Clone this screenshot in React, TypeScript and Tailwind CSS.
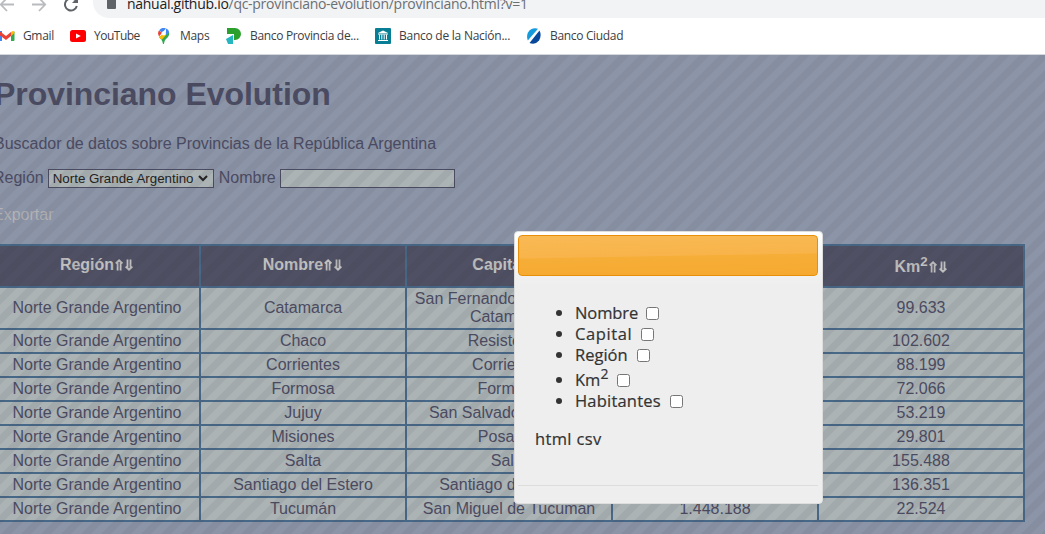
import React from "react";

const rows = [
  ["Norte Grande Argentino", "Catamarca", "San Fernando del Valle de Catamarca", "367.828", "99.633"],
  ["Norte Grande Argentino", "Chaco", "Resistencia", "1.055.259", "102.602"],
  ["Norte Grande Argentino", "Corrientes", "Corrientes", "992.595", "88.199"],
  ["Norte Grande Argentino", "Formosa", "Formosa", "530.162", "72.066"],
  ["Norte Grande Argentino", "Jujuy", "San Salvador de Jujuy", "673.307", "53.219"],
  ["Norte Grande Argentino", "Misiones", "Posadas", "1.101.593", "29.801"],
  ["Norte Grande Argentino", "Salta", "Salta", "1.214.441", "155.488"],
  ["Norte Grande Argentino", "Santiago del Estero", "Santiago del Estero", "874.006", "136.351"],
  ["Norte Grande Argentino", "Tucumán", "San Miguel de Tucumán", "1.448.188", "22.524"],
];

const Arrows = () => (
  <svg className="inline-block align-[-1px]" width="20" height="12" viewBox="0 0 20 12" fill="none" stroke="#c0c0c0" strokeWidth="1.8">
    <path d="M3.600 11.500V3M6.600 11.500V3M1.700 4.300 5.100 1.300 8.500 4.300M13.500 .5V9M16.500 .5V9M11.600 7.700 15 10.700l3.400-3" />
  </svg>
);

function Toolbar() {
  return (
    <div className="flex h-[18px] overflow-hidden">
      <svg className="shrink-0" width="93" height="18" viewBox="0 0 93 18" fill="none" strokeWidth="1.8">
        <path d="M14 4.500H1M7-2 .8 4.500 7 11M32 4.500h13M39-2l6.200 6.500L39 11" stroke="#b9bbbe" />
        <path d="M76.800 6A6 6 0 1 1 75 0" stroke="#5f6368" strokeWidth="2" />
        <path d="M78-3v6h-6z" fill="#5f6368" />
      </svg>
      <div className="flex h-[18px] flex-1 rounded-bl-[16px] bg-[#f1f3f4] pl-[14px]">
        <svg className="shrink-0" width="9" height="10" viewBox="0 0 9 10">
          <path d="M0 0h9v8a1 1 0 0 1-1 1H1a1 1 0 0 1-1-1z" fill="#5f6368" />
        </svg>
        <div className="-mt-[7px] ml-[11px] h-[24px] whitespace-nowrap text-[14px] leading-[22px] tracking-[-0.28px] text-[#6b6f74]">
          <span className="text-[#202124]">nahual.github.io</span>/qc-provinciano-evolution/provinciano.html?v=1
        </div>
      </div>
    </div>
  );
}

const Mark = ({ children, w, label, className }: { children: React.ReactNode; w: string; label: string; className: string }) => (
  <div className={"flex h-full shrink-0 items-center " + w}>
    {children}
    <span className={"whitespace-nowrap " + className}>{label}</span>
  </div>
);

function Bookmarks() {
  return (
    <div className="flex h-[36px] items-center text-[12px] text-[#3c4043]">
      <Mark w="w-[70px]" label="Gmail" className="ml-[8px] tracking-[-0.35px]">
        <svg width="15" height="12" viewBox="0 0 15 12">
          <path d="M0 1h2v10H0z" fill="#4285f4" />
          <path d="M11 4l3.500-2.500V10a1 1 0 0 1-1 1H11z" fill="#34a853" />
          <path d="M-2 0 6 6l5-4v4L6 10-2 4z" fill="#ea4335" />
          <path d="M11 2q3.500-2.500 3.500 1L11 6z" fill="#fbbc04" />
        </svg>
      </Mark>
      <Mark w="w-[87px]" label="YouTube" className="ml-[8px] tracking-[-0.5px]">
        <svg width="16" height="12" viewBox="0 0 16 12">
          <rect width="16" height="12" rx="2.500" fill="#f00" />
          <path d="M6 3.400v5.200L10.800 6z" fill="#fff" />
        </svg>
      </Mark>
      <Mark w="w-[69px]" label="Maps" className="ml-[9px] tracking-[-0.3px]">
        <svg className="ml-[1px] mr-[1px] shrink-0" width="12" height="16" viewBox="0 0 12 16">
          <path d="M1 9c1.500 2 3.500 3 4 7h1c.500-4 2-5 4-7 1.500-2 1.500-4 .8-5.500z" fill="#34a853" />
          <path d="M1.200 2.300 4 5 8 .5Q4-1.300 1.200 2.300" fill="#4285f4" />
          <path d="M1 2.500 4 5 1 8.500Q-.8 5 1 2.500" fill="#ea4335" />
          <path d="m1 9 7-5v3l-4.500 5z" fill="#fbbc04" />
          <path d="M8 .5q3 1 3 4L8 7z" fill="#4285f4" />
          <circle cx="5.700" cy="5.400" r="2.100" fill="#fff" />
        </svg>
      </Mark>
      <Mark w="w-[149px]" label="Banco Provincia de..." className="ml-[8px] tracking-[-0.33px]">
        <svg width="16" height="16" viewBox="0 0 16 16">
          <path d="M1 0h8a6 6 0 0 1 0 12H8V6H1z" fill="#2ca02c" />
          <path d="M0 11l7-4v9H2z" fill="#25b6c0" />
        </svg>
      </Mark>
      <Mark w="w-[152px]" label="Banco de la Nación..." className="ml-[8px] tracking-[-0.25px]">
        <svg width="16" height="16" viewBox="0 0 16 16">
          <rect width="16" height="16" rx="1" fill="#087e94" />
          <path d="M3 6h10M4.500 6.500v5m2.300-5v5m2.400-5v5m2.300-5v5M3 12.500h10" stroke="#fff" />
          <path d="m3 5 5-2.500L13 5z" fill="#fff" />
        </svg>
      </Mark>
      <Mark w="w-[120px]" label="Banco Ciudad" className="ml-[9px] tracking-[-0.33px]">
        <svg width="14" height="16" viewBox="0 0 14 16">
          <path d="M11 .7 .8 12.500Q-.8 8 1 4.500 4.500-1 11 .7" fill="#159bdc" />
          <path d="M12.500 2.500 2.500 15q5.500 2.500 9.500-2.500 3-5 .5-10" fill="#07489a" />
        </svg>
      </Mark>
    </div>
  );
}

function Check({ className = "ml-[9px]" }: { className?: string }) {
  return <input type="checkbox" className={"h-[13px] w-[13px] appearance-none rounded-[2.5px] border border-[#767676] bg-white align-[-1px] " + className} />;
}

function Dialog() {
  const item = "h-[21px] list-item leading-[21px]";
  return (
    <div className="absolute left-[514px] top-[231px] h-[273px] w-[309px] rounded-[4px] border border-[#ddd] bg-[#eee] bg-[linear-gradient(#fff,#eee_54px)] p-[3px] pr-[4px] font-['Open_Sans','Trebuchet_MS',sans-serif] text-[16.5px] text-[#333] [-webkit-text-stroke:0.2px_#333]">
      <div className="h-[41px] rounded-[4px] border border-[#e78f08] bg-[linear-gradient(179deg,#f9b954_0%,#f8b44a_50%,#f6ae38_52%,#f6a930_100%)]" />
      <ul className="mt-[26px] list-disc pl-[57px]">
        <li className={item}><span className="tracking-[-0.1px]">Nombre</span><Check className="ml-[8px]" /></li>
        <li className={item}><span className="tracking-[0.6px]">Capital</span><Check /></li>
        <li className={item}>Región<Check /></li>
        <li className="list-item h-[25px] leading-[29px]">Km<sup className="top-[-7px] text-[14px] leading-[0]">2</sup><Check /></li>
        <li className={item}><span className="tracking-[0.2px]">Habitantes</span><Check /></li>
      </ul>
      <div className="mt-[17px] pl-[17px] leading-[22px] tracking-[0.35px]">html csv</div>
      <div className="mt-[35px] border-t border-[#ddd]" />
    </div>
  );
}

export default function App() {
  return (
    <div className="relative flex h-[534px] w-[1045px] flex-col overflow-hidden bg-white font-['Open_Sans','Noto_Sans',sans-serif]">
      <Toolbar />
      <Bookmarks />
      <div className="relative flex-1 overflow-hidden border-t border-[#d5d7dc] bg-[#8c94a8] font-['Liberation_Sans',Arial,sans-serif] text-[16px] leading-[18px] text-[#4b4b62]">
        <h1 className="-ml-[6px] mt-[21px] text-[32px] font-bold leading-[37px] tracking-[-0.05px]">Provinciano Evolution</h1>
        <p className="-ml-[6px] mt-[22px] tracking-[-0.015px]">Buscador de datos sobre Provincias de la República Argentina</p>
        <div className="-ml-[7px] mt-[15px] flex h-[20px] items-center">
          <span>Región</span>
          <div className="ml-[4px] flex h-[19px] w-[166px] items-center border border-[#4b4b62] bg-[#abb3b5] pl-[4px] text-[13.33px] text-[#222]">
            <span className="whitespace-nowrap pt-px">Norte Grande Argentino</span>
            <svg className="ml-[5px] shrink-0" width="10" height="7" viewBox="0 0 10 7" fill="none" stroke="#222" strokeWidth="2"><path d="m1 1 4 4 4-4" /></svg>
          </div>
          <span className="ml-[5px]">Nombre</span>
          <div className="ml-[4px] h-[19px] w-[175px] border border-[#4b4b62] bg-[#abb3b5]" />
        </div>
        <p className="-ml-[7px] mt-[18px] text-[#b3b3b5]">Exportar</p>
        <table className="-ml-[7px] mt-[20px] w-[1032px] table-fixed border-collapse border-2 border-[#486888] text-center">
          <thead>
            <tr className="h-[42px] bg-[#505064] text-[#c0c0c0]">
              {["Región", "Nombre", "Capital", "Habitantes", "Km"].map((h) => (
                <th key={h} className={h === "Km" ? "border-2 border-[#486888] p-0 pt-[2px]" : "border-2 border-[#486888] p-0 pb-[2px]"}>
                  {h}{h === "Km" && <sup className="top-[-6px] text-[13.3px] leading-[0]">2</sup>}<Arrows />
                </th>
              ))}
            </tr>
          </thead>
          <tbody>
            {rows.map((r, i) => (
              <tr key={r[1]} className={i === 0 ? "h-[42px] bg-[#abb3b5]" : "h-[24px] bg-[#abb3b5]"}>
                {r.map((c, j) => (
                  <td key={j} className="border-2 border-[#486888] px-[4px] py-0">{c}</td>
                ))}
              </tr>
            ))}
          </tbody>
        </table>
        <div className="pointer-events-none absolute inset-0 bg-[linear-gradient(135deg,rgba(50,50,60,0.07)_0%,rgba(50,50,60,0.07)_23%,transparent_27%,transparent_48%,rgba(50,50,60,0.07)_52%,rgba(50,50,60,0.07)_73%,transparent_77%)] bg-[length:20px_20px]" />
      </div>
      <Dialog />
    </div>
  );
}
